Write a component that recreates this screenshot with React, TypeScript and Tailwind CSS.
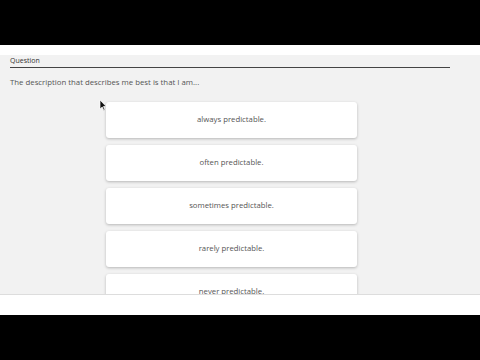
const options = [
  'always predictable.',
  'often predictable.',
  'sometimes predictable.',
  'rarely predictable.',
  'never predictable.',
];

export default function App() {
  return (
    <div className="w-[480px] h-[360px] flex flex-col bg-black overflow-hidden" style={{ fontFamily: '"Open Sans", "Liberation Sans", sans-serif' }}>
      <div className="h-[45px] bg-black shrink-0" />
      <div className="h-[10px] bg-white shrink-0" />
      <div className="relative h-[239px] bg-[#f2f2f2] overflow-hidden shrink-0">
        <div className="pl-[10px] pt-[1px]">
          <div className="w-[440px] border-b border-[#444] text-[7px] leading-[10px] text-[#333] pb-[1px]">Question</div>
          <p className="mt-[9px] text-[7.8px] leading-[10px] text-[#555]">The description that describes me best is that I am...</p>
        </div>
        <div className="mt-[15px] pl-[106px] flex flex-col items-start gap-[7px]">
          {options.map((o) => (
            <div key={o} className="w-[251px] h-[36px] shrink-0 bg-white rounded-[3px] shadow-[0_1px_3px_rgba(0,0,0,0.25)] flex items-center justify-center text-[7.75px] text-[#555]">
              {o}
            </div>
          ))}
        </div>
        <svg className="absolute left-[99px] top-[44px]" width="8" height="12" viewBox="0 0 8 12">
          <path d="M1 1 L1 10 L3.2 8 L4.8 11.5 L6 11 L4.5 7.5 L7.2 7.5 Z" fill="#111" stroke="#fff" strokeWidth="0.7" />
        </svg>
      </div>
      <div className="h-[21px] bg-white border-t border-[#ddd] shrink-0" />
      <div className="flex-1 bg-black" />
    </div>
  );
}
